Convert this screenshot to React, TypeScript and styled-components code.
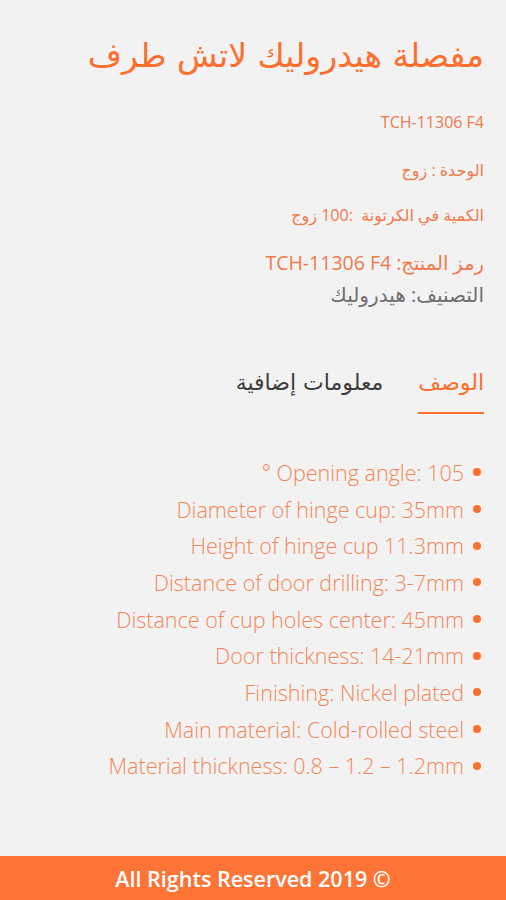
import React from 'react';
import styled, { createGlobalStyle } from 'styled-components';

const ORANGE = '#fd6f2f';

const GlobalStyle = createGlobalStyle`
  html, body {
    margin: 0;
    padding: 0;
    background: #f2f2f2;
  }
  body {
    font-family: 'Open Sans', 'DejaVu Sans', sans-serif;
  }
`;

const Page = styled.div`
  min-height: 100vh;
  display: flex;
  flex-direction: column;
  direction: rtl;
`;

const Content = styled.main`
  flex: 1;
  padding: 30px 22px 0 22px;
`;

const Title = styled.h1`
  margin: 0;
  font-family: 'DejaVu Sans', sans-serif;
  font-size: 33px;
  font-weight: normal;
  line-height: 52px;
  color: ${ORANGE};
`;

const Meta = styled.p<{ $size?: number; $muted?: boolean; $gap?: number }>`
  margin: ${(p) => p.$gap ?? 0}px 0 0 0;
  font-family: 'Open Sans', 'DejaVu Sans', sans-serif;
  font-size: ${(p) => p.$size ?? 16}px;
  line-height: 24px;
  color: ${(p) => (p.$muted ? '#707070' : '#f07a4c')};
`;

const Tabs = styled.nav`
  display: flex;
  gap: 35px;
  margin-top: 62px;
`;

const Tab = styled.div<{ $active?: boolean }>`
  font-family: 'DejaVu Sans', sans-serif;
  font-size: 22px;
  line-height: 28px;
  color: ${(p) => (p.$active ? ORANGE : '#3d3d3d')};
  padding: 0 0 15px;
  border-bottom: 2px solid ${(p) => (p.$active ? ORANGE : 'transparent')};
`;

const Specs = styled.ul`
  list-style: none;
  margin: 40px 0 0;
  padding: 0 3px 0 0;
`;

const Spec = styled.li`
  display: flex;
  align-items: center;
  gap: 9px;
  height: 36.7px;
  font-family: 'Open Sans', sans-serif;
  font-weight: 300;
  font-size: 21.5px;
  color: #f28659;
`;

const Dot = styled.span`
  flex: none;
  width: 8px;
  height: 8px;
  border-radius: 50%;
  background: ${ORANGE};
`;

const Footer = styled.footer`
  height: 44px;
  display: flex;
  align-items: center;
  justify-content: center;
  background: #fd7436;
  color: #fff;
  font-family: 'Open Sans', sans-serif;
  font-weight: 600;
  font-size: 21.5px;
`;

const specs = [
  'Opening angle: 105 °',
  'Diameter of hinge cup: 35mm',
  'Height of hinge cup 11.3mm',
  'Distance of door drilling: 3-7mm',
  'Distance of cup holes center: 45mm',
  'Door thickness: 14-21mm',
  'Finishing: Nickel plated',
  'Main material: Cold-rolled steel',
  'Material thickness: 0.8 – 1.2 – 1.2mm',
];

const App: React.FC = () => (
  <Page>
    <GlobalStyle />
    <Content>
      <Title>مفصلة هيدروليك لاتش طرف</Title>
      <Meta $gap={28}>TCH-11306 F4</Meta>
      <Meta $gap={24}>الوحدة : زوج</Meta>
      <Meta $gap={21}>الكمية في الكرتونة &nbsp;:100 زوج</Meta>
      <Meta $size={19.5} $gap={24}>رمز المنتج: TCH-11306 F4</Meta>
      <Meta $size={20} $gap={8} $muted>التصنيف: هيدروليك</Meta>

      <Tabs>
        <Tab $active>الوصف</Tab>
        <Tab>معلومات إضافية</Tab>
      </Tabs>

      <Specs>
        {specs.map((s) => (
          <Spec key={s}>
            <Dot />
            <span>{s}</span>
          </Spec>
        ))}
      </Specs>
    </Content>
    <Footer>
      <span dir='ltr'>All Rights Reserved 2019 ©</span>
    </Footer>
  </Page>
);

export default App;
